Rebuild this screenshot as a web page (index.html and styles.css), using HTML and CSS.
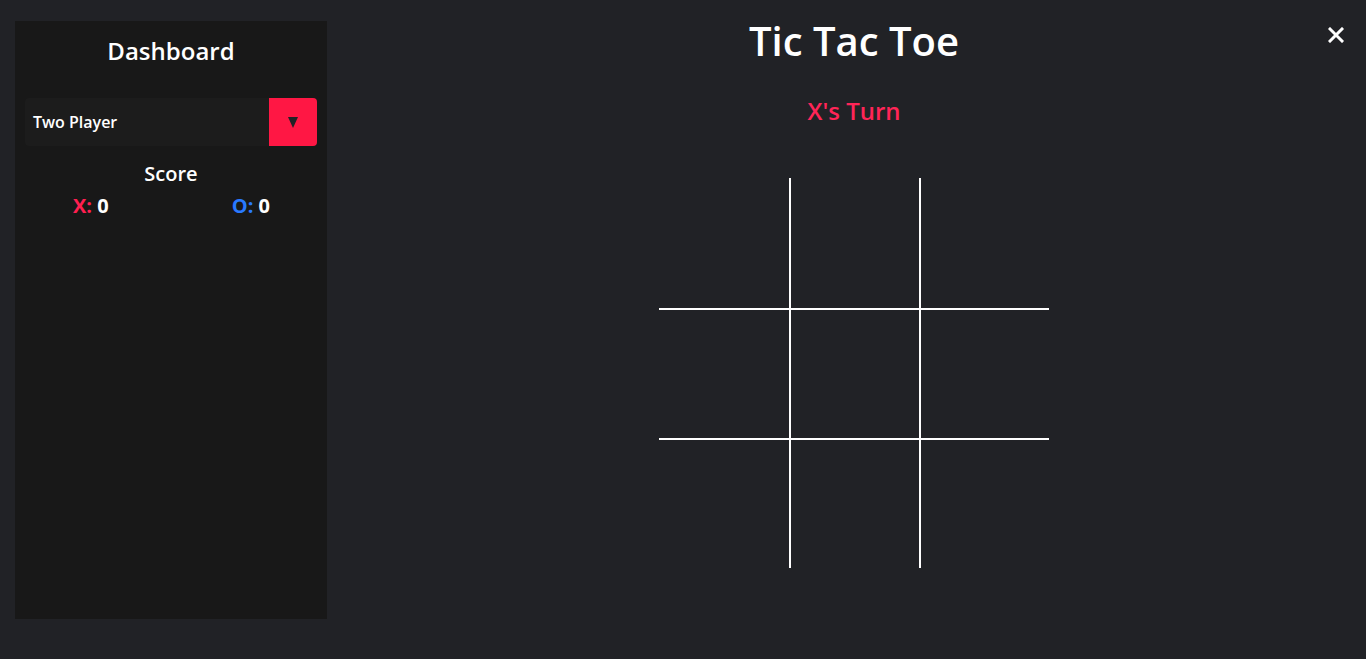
FILE: index.html
```html
<!DOCTYPE html>
<html>
<head>
<meta charset="utf-8">
<link rel="stylesheet" href="styles.css">
</head>
<body>
<div class="app">
  <aside class="sidebar">
    <h2 class="side-title">Dashboard</h2>
    <div class="select">
      <span class="select-label">Two Player</span>
      <span class="select-btn"><span class="tri"></span></span>
    </div>
    <div class="score-title">Score</div>
    <div class="scores">
      <span class="score"><span class="x">X:</span> 0</span>
      <span class="score"><span class="o">O:</span> 0</span>
    </div>
  </aside>
  <main class="main">
    <h1 class="title">Tic Tac Toe</h1>
    <div class="turn">X's Turn</div>
    <div class="board">
      <div class="cell"></div><div class="cell c2"></div><div class="cell c2"></div>
      <div class="cell r2"></div><div class="cell c2 r2"></div><div class="cell c2 r2"></div>
      <div class="cell r2"></div><div class="cell c2 r2"></div><div class="cell c2 r2"></div>
    </div>
  </main>
  <button class="close" aria-label="close">
    <svg width="16" height="16" viewBox="0 0 16 16"><path d="M2 2 L14 14 M14 2 L2 14" stroke="#fff" stroke-width="3" stroke-linecap="square"/></svg>
  </button>
</div>
</body>
</html>
```
FILE: styles.css
```css
* { box-sizing: border-box; }
html, body { margin: 0; padding: 0; }
body {
  background: #212226;
  color: #fff;
  font-family: "Open Sans", "Noto Sans", sans-serif;
  height: 659px;
  overflow: hidden;
}
.app {
  position: relative;
  display: flex;
  padding: 21px 0 0 15px;
}
.sidebar {
  width: 312px;
  height: 598px;
  background: #181818;
  padding: 10px 10px;
  display: flex;
  flex-direction: column;
}
.side-title {
  margin: 0;
  font-size: 24px;
  font-weight: 600;
  text-align: center;
  line-height: 40px;
}
.select {
  margin-top: 27px;
  height: 48px;
  display: flex;
  align-items: center;
  background: #1c1c1c;
  border-radius: 4px;
}
.select-label {
  flex: 1;
  padding-left: 8px;
  font-size: 16px;
  font-weight: 600;
}
.select-btn {
  width: 48px;
  height: 48px;
  background: #ff1744;
  border-radius: 0 4px 4px 0;
  display: flex;
  align-items: center;
  justify-content: center;
}
.tri {
  width: 0; height: 0;
  border-left: 5.5px solid transparent;
  border-right: 5.5px solid transparent;
  border-top: 11px solid #212226;
}
.score-title {
  margin-top: 14px;
  text-align: center;
  font-size: 20px;
  font-weight: 600;
  line-height: 28px;
}
.scores {
  display: flex;
  justify-content: space-between;
  font-size: 20px;
  font-weight: 700;
  line-height: 28px;
  margin-top: 4px;
  padding: 0 47px 0 48px;
}
.x { color: #ff1f50; }
.o { color: #2979ff; }
.main {
  flex: 1;
  margin-left: 15px;
  display: flex;
  flex-direction: column;
  align-items: center;
}
.title {
  margin: -7px 0 0;
  font-size: 40px;
  font-weight: 600;
  line-height: 54px;
}
.turn {
  margin-top: 26px;
  color: #ff2557;
  font-size: 24px;
  font-weight: 600;
  line-height: 34px;
}
.board {
  margin-top: 50px;
  width: 390px;
  height: 390px;
  display: grid;
  grid-template-columns: repeat(3, 130px);
  grid-template-rows: repeat(3, 130px);
}
.c2 { border-left: 2px solid #fff; }
.r2 { border-top: 2px solid #fff; }
.close {
  position: absolute;
  top: 27px;
  right: 22px;
  background: none;
  border: 0;
  padding: 0;
  width: 16px;
  height: 16px;
  display: block;
}
.close svg { display: block; }
```
